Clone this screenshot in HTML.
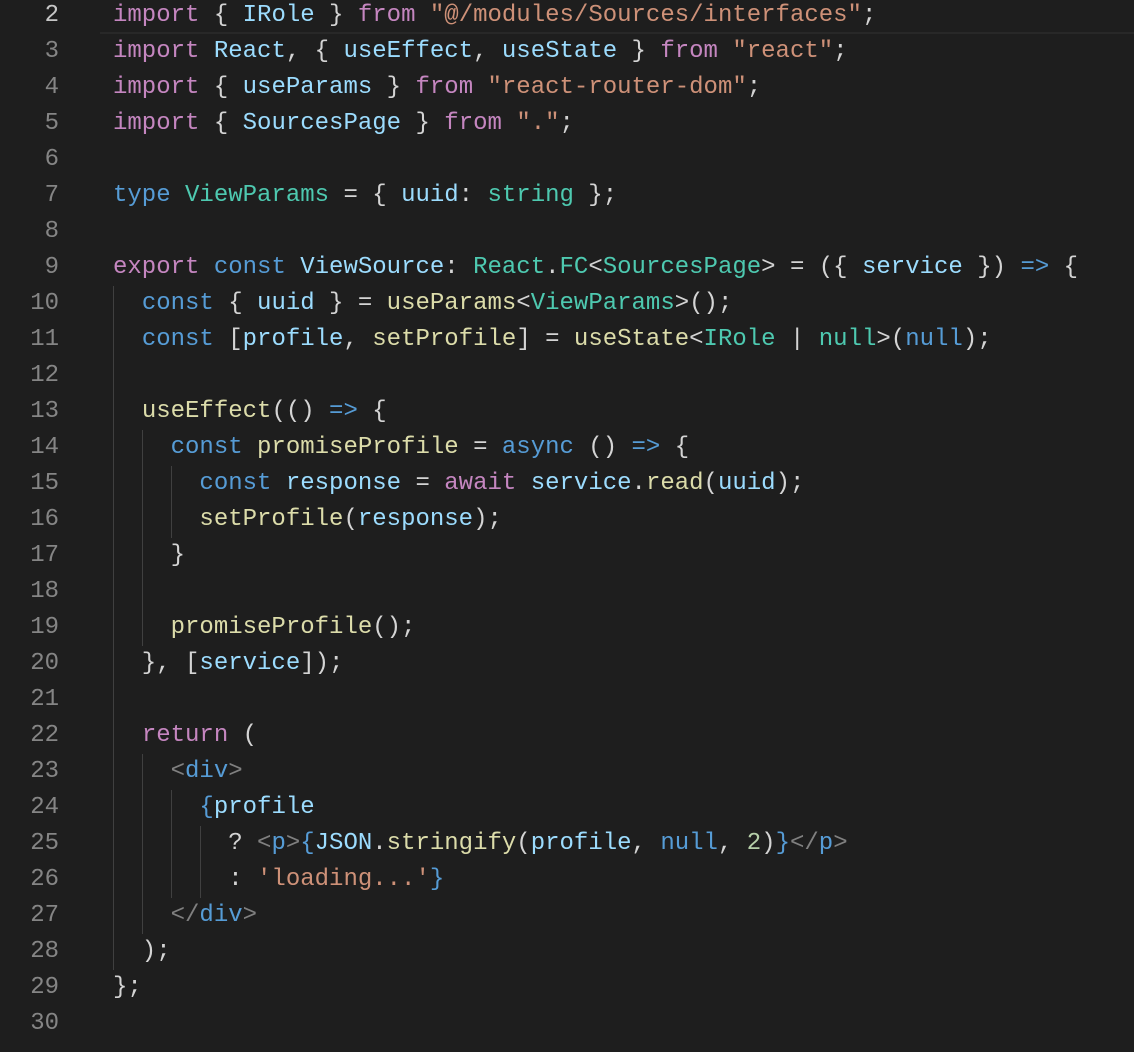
<!DOCTYPE html><html><head><style>
body{margin:0;background:#1e1e1e;width:1134px;height:1052px;overflow:hidden;position:relative;font-family:"Liberation Mono","DejaVu Sans Mono",monospace;font-size:24px}
.ln{position:absolute;left:0;top:-2px;width:59px;text-align:right;color:#858585;line-height:36px;white-space:pre}
pre{position:absolute;left:113px;top:-2px;margin:0;font:inherit;line-height:36px;color:#d4d4d4}
.k{color:#c586c0}.v{color:#9cdcfe}.s{color:#ce9178}.t{color:#4ec9b0}.f{color:#dcdcaa}.b{color:#569cd6}.n{color:#b5cea8}.g{color:#808080}.c{color:#4fc1ff}
.gd{position:absolute;width:1px;background:#404040}
.cur{position:absolute;left:100px;top:-2px;width:1034px;height:34px;border-bottom:2px solid #282828}
</style></head><body>
<div class="cur"></div>
<div class="gd" style="left:113px;top:286px;height:684px"></div>
<div class="gd" style="left:142px;top:430px;height:216px"></div>
<div class="gd" style="left:142px;top:754px;height:180px"></div>
<div class="gd" style="left:171px;top:466px;height:72px"></div>
<div class="gd" style="left:171px;top:790px;height:108px"></div>
<div class="gd" style="left:200px;top:826px;height:72px"></div>
<div class="ln"><span style="color:#c6c6c6">2</span>
3
4
5
6
7
8
9
10
11
12
13
14
15
16
17
18
19
20
21
22
23
24
25
26
27
28
29
30</div>
<pre><span class="k">import</span> { <span class="v">IRole</span> } <span class="k">from</span> <span class="s">"@/modules/Sources/interfaces"</span>;
<span class="k">import</span> <span class="v">React</span>, { <span class="v">useEffect</span>, <span class="v">useState</span> } <span class="k">from</span> <span class="s">"react"</span>;
<span class="k">import</span> { <span class="v">useParams</span> } <span class="k">from</span> <span class="s">"react-router-dom"</span>;
<span class="k">import</span> { <span class="v">SourcesPage</span> } <span class="k">from</span> <span class="s">"."</span>;

<span class="b">type</span> <span class="t">ViewParams</span> = { <span class="v">uuid</span>: <span class="t">string</span> };

<span class="k">export</span> <span class="b">const</span> <span class="v">ViewSource</span>: <span class="t">React</span>.<span class="t">FC</span>&lt;<span class="t">SourcesPage</span>&gt; = ({ <span class="v">service</span> }) <span class="b">=&gt;</span> {
  <span class="b">const</span> { <span class="v">uuid</span> } = <span class="f">useParams</span>&lt;<span class="t">ViewParams</span>&gt;();
  <span class="b">const</span> [<span class="v">profile</span>, <span class="f">setProfile</span>] = <span class="f">useState</span>&lt;<span class="t">IRole</span> | <span class="t">null</span>&gt;(<span class="b">null</span>);

  <span class="f">useEffect</span>(() <span class="b">=&gt;</span> {
    <span class="b">const</span> <span class="f">promiseProfile</span> = <span class="b">async</span> () <span class="b">=&gt;</span> {
      <span class="b">const</span> <span class="v">response</span> = <span class="k">await</span> <span class="v">service</span>.<span class="f">read</span>(<span class="v">uuid</span>);
      <span class="f">setProfile</span>(<span class="v">response</span>);
    }

    <span class="f">promiseProfile</span>();
  }, [<span class="v">service</span>]);

  <span class="k">return</span> (
    <span class="g">&lt;</span><span class="b">div</span><span class="g">&gt;</span>
      <span class="b">{</span><span class="v">profile</span>
        ? <span class="g">&lt;</span><span class="b">p</span><span class="g">&gt;</span><span class="b">{</span><span class="v">JSON</span>.<span class="f">stringify</span>(<span class="v">profile</span>, <span class="b">null</span>, <span class="n">2</span>)<span class="b">}</span><span class="g">&lt;/</span><span class="b">p</span><span class="g">&gt;</span>
        : <span class="s">'loading...'</span><span class="b">}</span>
    <span class="g">&lt;/</span><span class="b">div</span><span class="g">&gt;</span>
  );
};
</pre>
</body></html>
